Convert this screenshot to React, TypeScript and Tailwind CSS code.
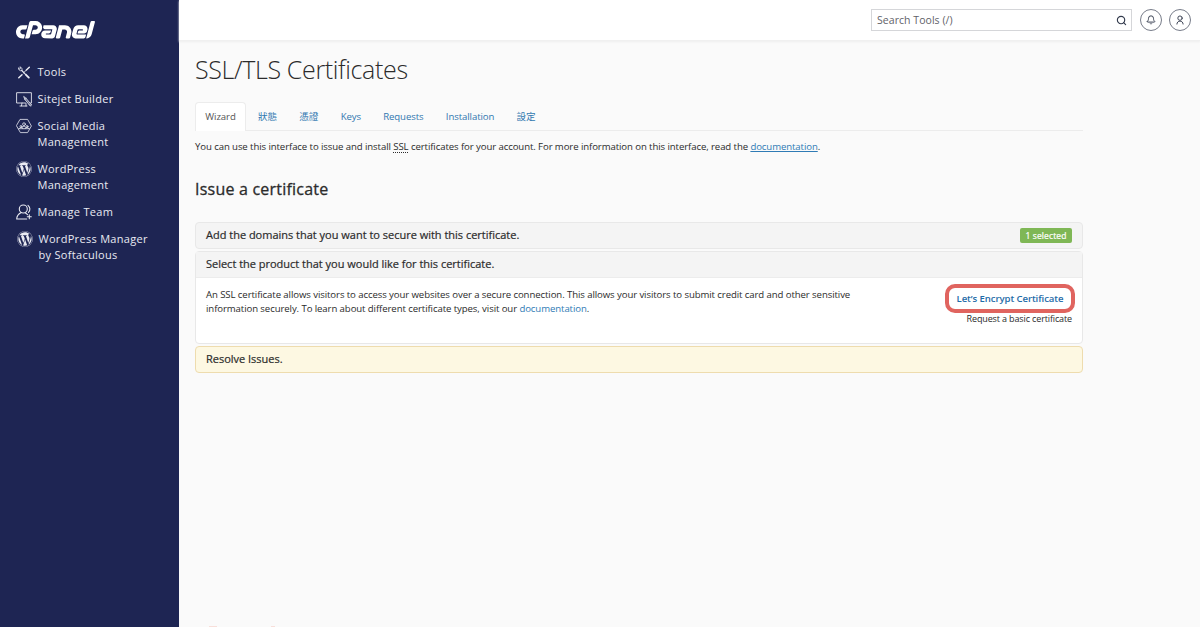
import { Bell, Search } from "lucide-react";
import type { ReactNode } from "react";
import { FaCpanel, FaWordpress } from "react-icons/fa";

const stroke = {
  viewBox: "0 0 16 16",
  fill: "none",
  stroke: "currentColor",
  strokeWidth: 0.9,
  strokeLinecap: "round",
  strokeLinejoin: "round",
} as const;

const ToolsIcon = () => (
  <svg {...stroke} className="size-4">
    <path d="M13.3 3.300 10.400 6M6 10.800l-3.200 3" strokeWidth="1.500" />
    <path d="m10.400 6-3 3" />
    <path d="m5.800 6.500 3 3.100" strokeWidth="1.200" />
    <path d="M2.500 4.100c-.4 1.900 1.800 3.200 3.300 2.400.9-1.600-.3-3.500-2-3.600l.9 1.400-.8.800z" strokeWidth=".8" />
    <path d="m9.800 10.600 3 3" strokeWidth="1.900" />
  </svg>
);

const SitejetIcon = () => (
  <svg {...stroke} className="size-4">
    <path d="M9.500 12H.6V1.700h14.800V12h-.8M6 12l-.5 2.800M4 15h7M10 12.500V15" />
    <path d="m7.800 5.800 1 2.600 4.600 5.600 1.300-1.100-4.500-5.500zM8.800 8.400l1.400-1M13.400 14l1.300 1.300.8-2" fill="currentColor" fillOpacity=".35" strokeWidth=".8" />
  </svg>
);

const SocialIcon = () => (
  <svg {...stroke} className="size-4" strokeWidth=".8">
    <path d="M4.400 1.400h7.200L15.400 8l-3.800 6.600H4.400L.6 8z" />
    <circle cx="8" cy="6.200" r="1.400" />
    <circle cx="5" cy="8.500" r="1" />
    <circle cx="11" cy="8.500" r="1" />
    <path d="M3 10.700h10M3 10.700c.3-1.700 3.500-1.700 4 0M9 10.700c.5-1.700 3.700-1.700 4 0M6.200 9.500c.7-1.700 2.900-1.700 3.600 0" />
  </svg>
);

const TeamIcon = () => (
  <svg {...stroke} className="size-4" strokeWidth="1.1">
    <circle cx="7.300" cy="5" r="4" />
    <path d="M5.200 8.600C2.500 10 .8 12 .7 15h10M9.500 9c.8.500 1.500 1 2 1.600M12 1.300c2.300 1.900 2.500 5 .5 7M13.300 10.800v4M11.300 12.800h4" />
  </svg>
);

const UserIcon = () => (
  <svg {...stroke} className="size-[10px]" strokeWidth="1.500">
    <circle cx="8" cy="5" r="3.500" />
    <path d="M3 14.500c0-6.500 10-6.500 10 0" />
  </svg>
);

const navItems: { icon: ReactNode; label: string[] }[] = [
  { icon: <ToolsIcon />, label: ["Tools"] },
  { icon: <SitejetIcon />, label: ["Sitejet Builder"] },
  { icon: <SocialIcon />, label: ["Social Media", "Management"] },
  { icon: <FaWordpress className="size-4" />, label: ["WordPress", "Management"] },
  { icon: <TeamIcon />, label: ["Manage Team"] },
  { icon: <FaWordpress className="size-4 translate-x-px" />, label: ["WordPress Manager", "by Softaculous"] },
];

const tabs = ["狀態", "憑證", "Keys", "Requests", "Installation", "設定"];

const Sidebar = () => (
  <aside className="w-[179px] shrink-0 bg-[#1e2553] text-[#e9eaf2]">
    <FaCpanel className="mt-[-2px] ml-4 h-[65px] w-[79px] text-white" />
    <nav className="mt-px flex flex-col gap-[11px] pl-4">
      {navItems.map((item, i) => (
        <div key={i} className="flex gap-[5.500px]">
          {item.icon}
          <div className={`text-[11px] leading-4 tracking-[0.300px] whitespace-nowrap ${i === 5 ? "pl-px" : ""}`}>
            {item.label.map((line) => (
              <div key={line}>{line}</div>
            ))}
          </div>
        </div>
      ))}
    </nav>
  </aside>
);

const Header = () => (
  <header className="flex h-[41px] shrink-0 items-center justify-end border-b border-[#f0f0f0] bg-white pr-[9px] text-[#333b4d] shadow-[0_1px_2px_#eeeeee]">
    <div className="mr-2 flex h-[22px] w-[261px] items-center justify-between border border-[#d5d6d9] pr-1 pl-[5px] text-[10.500px] text-[#5f6269]">
      <span className="pt-px tracking-[0.050px]">Search Tools (/)</span>
      <Search className="size-[11px] text-[#333b4d]" strokeWidth={2.500} />
    </div>
    <div className="mr-[7px] flex size-[22px] items-center justify-center rounded-full border border-[#777c89]">
      <Bell className="size-[10px]" strokeWidth={2.300} />
    </div>
    <div className="flex size-[22px] items-center justify-center rounded-full border border-[#777c89]">
      <UserIcon />
    </div>
  </header>
);

const App = () => {
  return (
    <div className="flex h-[627px] w-[1200px] overflow-hidden bg-[#fafafa] font-['Open_Sans','Noto_Sans_CJK_TC',sans-serif] text-[#2b2b2b]">
      <Sidebar />
      <div className="flex flex-1 flex-col">
        <Header />
        <main className="ml-4 w-[888px] text-[9.600px] tracking-[-0.090px]">
          <h1 className="mt-[10px] h-[38px] text-[25px] leading-[37px] font-light tracking-[-0.350px] whitespace-nowrap">SSL/TLS Certificates</h1>
          {/* tabs */}
          <div className="mt-[13px] flex h-[29px] border-b border-[#ececec] text-[#3178b0]">
            <div className="mb-[-1px] flex w-[51px] items-center justify-center rounded-t-sm border border-b-0 border-[#ececec] bg-white text-[#555]">Wizard</div>
            <div className="ml-3 flex items-center gap-[22.300px] pt-[2px]">
              {tabs.map((tab) => (
                <span key={tab}>{tab}</span>
              ))}
            </div>
          </div>
          <p className="mt-[9px] leading-[14px] whitespace-nowrap">
            You can use this interface to issue and install <span className="underline decoration-dotted underline-offset-2">SSL</span> certificates for your account. For more information on this interface, read the{" "}
            <a className="text-[#2f7bb5] underline">documentation</a>.
          </p>
          <h2 className="mt-[23px] text-[16px] leading-6 tracking-[0.220px] [-webkit-text-stroke:0.3px]">Issue a certificate</h2>
          {/* wizard steps */}
          <div className="mt-[21px] flex flex-col gap-[2px] text-[11px]">
            <div className="flex h-[27px] items-center justify-between rounded-sm border border-[#e8e8e8] bg-[#f4f4f4] pr-[10px] pl-[10px]">
              <span className="tracking-[-0.010px] [-webkit-text-stroke:0.2px]">Add the domains that you want to secure with this certificate.</span>
              <span className="flex h-[15px] w-[52px] items-center justify-center rounded-[2px] bg-[#7fb755] pt-px text-[8.500px] tracking-[0.100px] text-white [-webkit-text-stroke:0.2px]">1 selected</span>
            </div>
            <div className="h-[93px] rounded-sm border border-[#e8e8e8] bg-white">
              <div className="flex h-[26px] items-center border-b border-[#ececec] bg-[#f4f4f4] pl-[10px] tracking-[-0.010px] [-webkit-text-stroke:0.2px]">
                Select the product that you would like for this certificate.
              </div>
              <div className="flex justify-between pl-[10px] text-[9.600px]">
                <p className="mt-[10px] leading-[14px] whitespace-nowrap">
                  An SSL certificate allows visitors to access your websites over a secure connection. This allows your visitors to submit credit card and other sensitive
                  <br />
                  information securely. To learn about different certificate types, visit our <a className="text-[#2f7bb5]">documentation</a>.
                </p>
                <div className="mt-[6px] mr-[7px] flex flex-col items-end">
                  <a className="flex h-[29px] w-[130px] items-center justify-center rounded-[10px] border-4 border-[#e0645f] pt-px font-semibold tracking-[-0.100px] whitespace-nowrap text-[#1f6ca8]">Let’s Encrypt Certificate</a>
                  <span className="mr-[3px] text-[9px] leading-3 tracking-[-0.130px] whitespace-nowrap">Request a basic certificate</span>
                </div>
              </div>
            </div>
            <div className="flex h-[27px] items-center rounded-sm border border-[#eedcae] bg-[#fdf8e2] pl-[10px] tracking-[-0.010px] [-webkit-text-stroke:0.2px]">Resolve Issues.</div>
          </div>
        </main>
        {/* tops of the footer marks */}
        <div className="mt-auto ml-[30px] flex h-px gap-[54px]">
          <span className="w-2 bg-[#f8dfda]" />
          <span className="w-1 bg-[#f8dfda]" />
        </div>
      </div>
    </div>
  );
};

export default App;
